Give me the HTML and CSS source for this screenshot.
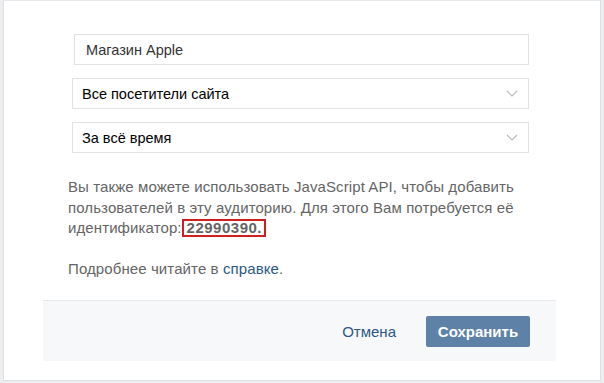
FILE: index.html
```html
<!DOCTYPE html>
<html lang="ru">
<head>
    <meta charset="UTF-8">
    <title>Аудитория ретаргетинга</title>
    <link rel="stylesheet" href="styles.css">
</head>
<body>
<div class="frame">
    <div class="box">
        <div class="form">
            <div class="field field-name">Магазин Apple</div>
            <div class="field select">
                <span>Все посетители сайта</span>
                <svg class="chevron" width="12" height="7" viewBox="0 0 12 7"><path d="M1 1l5 5 5-5" fill="none" stroke="#b4b9c0" stroke-width="1.1"/></svg>
            </div>
            <div class="field select">
                <span>За всё время</span>
                <svg class="chevron" width="12" height="7" viewBox="0 0 12 7"><path d="M1 1l5 5 5-5" fill="none" stroke="#b4b9c0" stroke-width="1.1"/></svg>
            </div>
        </div>
        <p class="info">Вы также можете использовать JavaScript API, чтобы добавить пользователей в эту аудиторию. Для этого Вам потребуется её идентификатор:<b class="mark">22990390.</b></p>
        <p class="info more">Подробнее читайте в <a href="#">справке</a>.</p>
        <div class="footer">
            <a href="#" class="cancel">Отмена</a>
            <button class="save">Сохранить</button>
        </div>
    </div>
</div>
</body>
</html>
```

FILE: styles.css
```css
* {
    margin: 0;
    padding: 0;
    box-sizing: border-box;
}

body {
    background-color: #edeef0;
    font-family: "Liberation Sans", Arial, sans-serif;
    width: 604px;
    height: 383px;
}

.frame {
    width: 598px;
    height: 381px;
    margin-left: 3px;
    background-color: #fff;
    border: 1px solid #dde0e4;
    border-top-color: #e6e8eb;
}

.box {
    width: 513px;
    margin-left: 39px;
    padding-top: 33px;
}

.form {
    padding: 0 27px 0 29px;
}

.field {
    height: 31px;
    border: 1px solid #e0e2e6;
    font-size: 14.5px;
    color: #000;
    display: flex;
    align-items: center;
    justify-content: space-between;
    padding: 0 10px 0 9px;
    margin-bottom: 13px;
}

.field:last-child {
    margin-bottom: 0;
}

.field-name {
    margin-left: 2px;
    padding-left: 11px;
    color: #333;
}

.info {
    font-size: 15px;
    letter-spacing: 0.1px;
    line-height: 20.5px;
    color: #656565;
    padding: 0 24px 0 25px;
    margin-top: 24px;
}

.mark {
    display: inline-block;
    line-height: 14px;
    color: #656565;
    border: 2px solid #d01d1d;
    padding: 0 2px 0 3px;
    letter-spacing: 0.5px;
}

.more {
    margin-top: 20px;
}

.info a {
    color: #2a5885;
    text-decoration: none;
}

.footer {
    margin-top: 21px;
    height: 61px;
    background-color: #f7f8fa;
    border-top: 1px solid #e7e8ec;
    display: flex;
    align-items: center;
    justify-content: flex-end;
    padding-right: 26px;
}

.cancel {
    color: #2a5885;
    font-size: 15px;
    text-decoration: none;
    margin-right: 30px;
}

.save {
    width: 104px;
    height: 31px;
    border: none;
    border-radius: 2px;
    background-color: #5e81a8;
    color: #fff;
    font-family: "Liberation Sans", Arial, sans-serif;
    font-size: 15px;
    font-weight: bold;
}
```
